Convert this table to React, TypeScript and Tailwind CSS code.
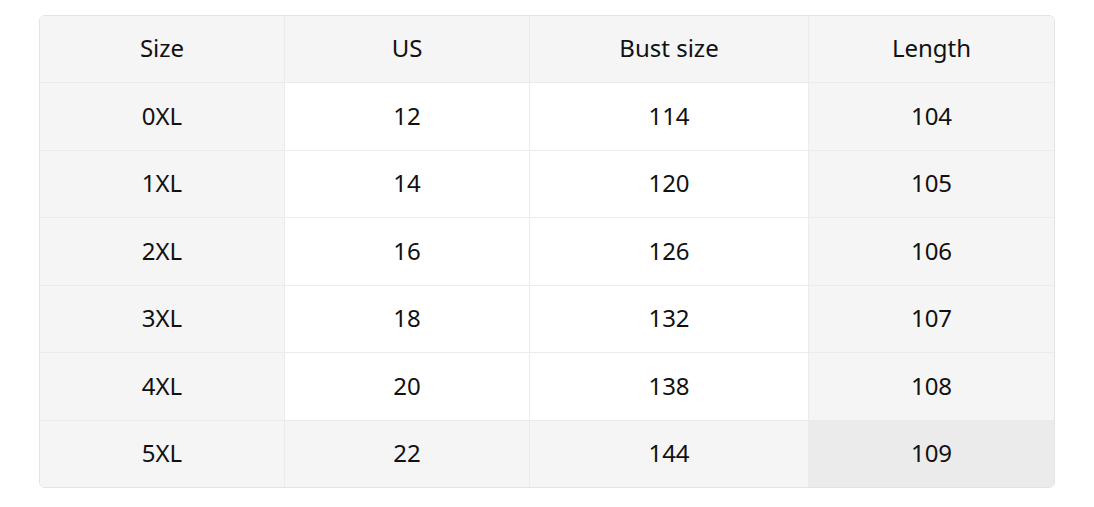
const headers = ["Size", "US", "Bust size", "Length"];

const rows = [
  ["0XL", "12", "114", "104"],
  ["1XL", "14", "120", "105"],
  ["2XL", "16", "126", "106"],
  ["3XL", "18", "132", "107"],
  ["4XL", "20", "138", "108"],
  ["5XL", "22", "144", "109"],
];

export default function App() {
  const all = [headers, ...rows];

  return (
    <div className="min-h-screen bg-white px-[39px] pt-[15px]" style={{ fontFamily: '"Noto Sans", "Open Sans", sans-serif' }}>
      <div className="grid w-[1016px] grid-cols-[245px_245px_279px_245px] grid-rows-[67px_68px_67px_68px_67px_68px_66px] overflow-hidden rounded-md border border-[#e3e3e3] text-[24px] text-[#111]">
        {all.map((row, r) =>
          row.map((cell, c) => {
            const isHeader = r === 0;
            const isLastRow = r === all.length - 1;
            const isLastCol = c === row.length - 1;
            let bg = "bg-white";
            if (isHeader || c === 0 || isLastCol || isLastRow) bg = "bg-[#f5f5f5]";
            if (isLastRow && isLastCol) bg = "bg-[#ebebeb]";
            return (
              <div
                key={`${r}-${c}`}
                className={`flex items-center justify-center pb-[2px] ${bg} ${isLastCol ? "" : "border-r"} ${isLastRow ? "" : "border-b"} border-[#ebebeb]`}
              >
                {cell}
              </div>
            );
          })
        )}
      </div>
    </div>
  );
}
